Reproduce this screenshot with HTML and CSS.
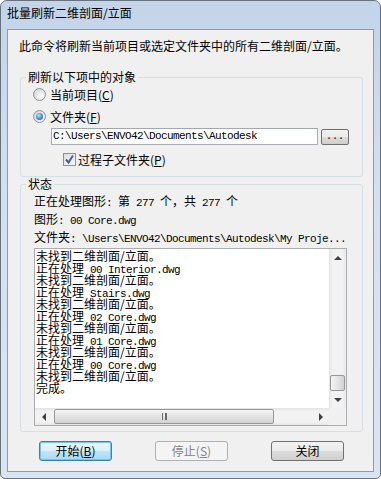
FILE: index.html
```
<!DOCTYPE html>
<html>
<head>
	<title>批量刷新二维剖面/立面</title>
	<link rel="stylesheet" href="styles.css">
</head>

<body>
<div class="window">
	<div class="title">批量刷新二维剖面/立面</div>
	<div class="client">
		<div class="desc">此命令将刷新当前项目或选定文件夹中的所有二维剖面/立面。</div>

		<fieldset class="group group-top">
			<legend>刷新以下项中的对象</legend>
			<div class="opt first">
				<span class="radio"></span>
				<span>当前项目(<u>C</u>)</span>
			</div>
			<div class="opt">
				<span class="radio on"></span>
				<span>文件夹(<u>F</u>)</span>
			</div>
			<div class="path-row">
				<div class="path m">C:\Users\ENVO42\Documents\Autodesk</div>
				<div class="browse">...</div>
			</div>
			<div class="check-row">
				<span class="check">
					<svg width="11" height="11" viewBox="0 0 11 11"><path d="M2 5.5 L4.5 8.5 L9 1.5" fill="none" stroke="#4a5f97" stroke-width="2"/></svg>
				</span>
				<span>过程子文件夹(<u>P</u>)</span>
			</div>
		</fieldset>

		<fieldset class="group group-status">
			<legend>状态</legend>
			<div class="status first">正在处理图形<span class="m">: </span>第<span class="m"> 277 </span>个，共<span class="m"> 277 </span>个</div>
			<div class="status">图形<span class="m">: 00 Core.dwg</span></div>
			<div class="status">文件夹<span class="m">: \Users\ENVO42\Documents\Autodesk\My Proje...</span></div>

			<div class="log">
				<div class="log-text">
					<div>未找到二维剖面/立面。</div>
					<div>正在处理<span class="m"> 00 Interior.dwg</span></div>
					<div>未找到二维剖面/立面。</div>
					<div>正在处理<span class="m"> Stairs.dwg</span></div>
					<div>未找到二维剖面/立面。</div>
					<div>正在处理<span class="m"> 02 Core.dwg</span></div>
					<div>未找到二维剖面/立面。</div>
					<div>正在处理<span class="m"> 01 Core.dwg</span></div>
					<div>未找到二维剖面/立面。</div>
					<div>正在处理<span class="m"> 00 Core.dwg</span></div>
					<div>未找到二维剖面/立面。</div>
					<div>完成。</div>
				</div>
				<div class="vscroll">
					<div class="sbtn"><span class="tri up"></span></div>
					<div class="vtrack"><div class="vthumb"></div></div>
					<div class="sbtn"><span class="tri down"></span></div>
				</div>
				<div class="hscroll">
					<div class="sbtn"><span class="tri left"></span></div>
					<div class="htrack"><div class="hthumb"><span class="grip"></span></div></div>
					<div class="sbtn"><span class="tri right"></span></div>
				</div>
				<div class="corner"></div>
			</div>
		</fieldset>

		<div class="buttons">
			<div class="btn default">开始(<u>B</u>)</div>
			<div class="btn disabled">停止(<u>S</u>)</div>
			<div class="btn">关闭</div>
		</div>
	</div>
</div>
</body>
</html>
```

FILE: styles.css
```
body {
	margin: 0;
	padding: 0;
	font-family: "Noto Sans CJK SC", "Liberation Sans", sans-serif;
	font-size: 12px;
	color: #000;
	background: #fff;
}

.m {
	font-family: "Liberation Mono", "Noto Sans CJK SC", monospace;
	font-size: 11px;
	letter-spacing: -0.6px;
}

u {
	text-decoration: underline;
}

.window {
	width: 381px;
	height: 479px;
	box-sizing: border-box;
	border: 1px solid #67727f;
	border-radius: 7px 7px 5px 5px;
	background: linear-gradient(#c3d4e9, #d3e0f0 40%, #dae5f2);
	padding: 0 6px;
}

.title {
	height: 28px;
	line-height: 24px;
	font-size: 12px;
	white-space: nowrap;
}

.client {
	height: 443px;
	box-sizing: border-box;
	border: 1px solid #8c9bae;
	background: #f0f0f0;
	padding: 9px 0 0 12px;
}

.desc {
	margin-left: -1px;
	height: 14px;
	line-height: 14px;
	white-space: nowrap;
}

.group {
	width: 343px;
	box-sizing: border-box;
	margin: 0;
	padding: 0;
	border: 1px solid #d5dfe5;
	border-radius: 3px;
	min-inline-size: 0;
}

.group legend {
	margin-left: 5px;
	padding: 0 2px;
	line-height: 14px;
}

.group-top {
	margin-top: 17px;
	padding-bottom: 10px;
}

.group-status {
	margin-top: 0;
	padding-bottom: 5px;
}

.opt {
	display: flex;
	align-items: center;
	height: 22px;
	padding-left: 12px;
	gap: 4px;
	white-space: nowrap;
}

.opt.first {
	margin-top: -1px;
}

.radio {
	position: relative;
	width: 13px;
	height: 13px;
	box-sizing: border-box;
	border-radius: 50%;
	border: 1px solid #8e8f8f;
	background: radial-gradient(circle at 65% 65%, #fcfcfc, #dcdcdc 70%, #cfcfcf);
}

.radio.on::after {
	content: "";
	position: absolute;
	left: 2px;
	top: 2px;
	width: 7px;
	height: 7px;
	border-radius: 50%;
	background: radial-gradient(circle at 40% 35%, #b7e3fb, #3d8fd6 55%, #0f4c8c);
}

.path-row {
	display: flex;
	gap: 3px;
	margin-top: 1px;
	padding-left: 30px;
}

.path {
	width: 267px;
	height: 17px;
	box-sizing: border-box;
	border: 1px solid #abadb3;
	border-top-color: #a3a7b0;
	background: #fff;
	padding-left: 1px;
	line-height: 15px;
	white-space: nowrap;
}

.browse {
	width: 28px;
	height: 16px;
	margin-top: 1px;
	box-sizing: border-box;
	border: 1px solid #707070;
	border-radius: 2px;
	background: linear-gradient(#f2f2f2, #ebebeb 50%, #dddddd 50%, #cfcfcf);
	text-align: center;
	font-family: "Liberation Mono", monospace;
	font-size: 10px;
	line-height: 14px;
}

.check-row {
	display: flex;
	align-items: center;
	height: 14px;
	margin-top: 7px;
	padding-left: 42px;
	gap: 2px;
	white-space: nowrap;
}

.check {
	display: flex;
	align-items: center;
	justify-content: center;
	width: 13px;
	height: 13px;
	box-sizing: border-box;
	border: 1px solid #8e8f8f;
	background: linear-gradient(135deg, #dcdfe3, #f8f8f8);
}

.status {
	height: 18px;
	line-height: 18px;
	padding-left: 13px;
	white-space: nowrap;
}

.status.first {
	margin-top: 1px;
}

.log {
	display: grid;
	grid-template-columns: 1fr 17px;
	grid-template-rows: 1fr 17px;
	width: 313px;
	height: 178px;
	box-sizing: border-box;
	margin: 2px 0 0 13px;
	border: 1px solid #abadb3;
	background: #fff;
}

.log-text {
	overflow: hidden;
	padding: 1px 0 0 1px;
	white-space: nowrap;
}

.log-text div {
	height: 12px;
	line-height: 12px;
}

.log-text .m {
	line-height: 12px;
}

.vscroll {
	display: flex;
	flex-direction: column;
	background: linear-gradient(90deg, #e3e3e3, #f2f2f2 20%, #f2f2f2 80%, #e7e7e7);
}

.hscroll {
	display: flex;
	background: linear-gradient(#e3e3e3, #f2f2f2 20%, #f2f2f2 80%, #e7e7e7);
}

.corner {
	background: #f0f0f0;
}

.sbtn {
	display: flex;
	align-items: center;
	justify-content: center;
	width: 17px;
	height: 17px;
	flex: none;
}

.tri {
	width: 0;
	height: 0;
	border: 4px solid transparent;
}

.tri.up {
	border-bottom-color: #404040;
	border-top-width: 0;
}

.tri.down {
	border-top-color: #404040;
	border-bottom-width: 0;
}

.tri.left {
	border-right-color: #404040;
	border-left-width: 0;
}

.tri.right {
	border-left-color: #404040;
	border-right-width: 0;
}

.vtrack {
	flex: 1;
	display: flex;
	flex-direction: column;
	justify-content: flex-end;
	align-items: center;
}

.vthumb {
	width: 15px;
	height: 16px;
	box-sizing: border-box;
	border: 1px solid #979797;
	border-radius: 2px;
	background: linear-gradient(90deg, #f4f4f4, #e4e4e4 50%, #d2d2d2);
}

.htrack {
	flex: 1;
	display: flex;
	align-items: center;
}

.hthumb {
	display: flex;
	align-items: center;
	justify-content: center;
	width: 220px;
	height: 15px;
	margin-left: 2px;
	box-sizing: border-box;
	border: 1px solid #979797;
	border-radius: 2px;
	background: linear-gradient(#f4f4f4, #e4e4e4 50%, #d2d2d2);
}

.grip {
	width: 5px;
	height: 7px;
	border-left: 1px solid #6c6c6c;
	border-right: 1px solid #6c6c6c;
	background: linear-gradient(90deg, transparent 2px, #6c6c6c 2px, #6c6c6c 3px, transparent 3px);
	box-sizing: border-box;
}

.buttons {
	display: flex;
	margin-top: 9px;
	padding-left: 19px;
	gap: 43px;
}

.btn {
	width: 73px;
	height: 20px;
	box-sizing: border-box;
	border: 1px solid #707070;
	border-radius: 3px;
	background: linear-gradient(#f2f2f2, #ebebeb 50%, #dddddd 50%, #cfcfcf);
	text-align: center;
	line-height: 18px;
	white-space: nowrap;
}

.btn.default {
	border-color: #3c7fb1;
	background: linear-gradient(#eaf6fd, #d9f0fc 50%, #bee6fd 50%, #a7d9f5);
	box-shadow: inset 0 0 0 1px #74c4ee;
}

.btn.disabled {
	border-color: #adb2b5;
	background: #f4f4f4;
	color: #838383;
}
```
